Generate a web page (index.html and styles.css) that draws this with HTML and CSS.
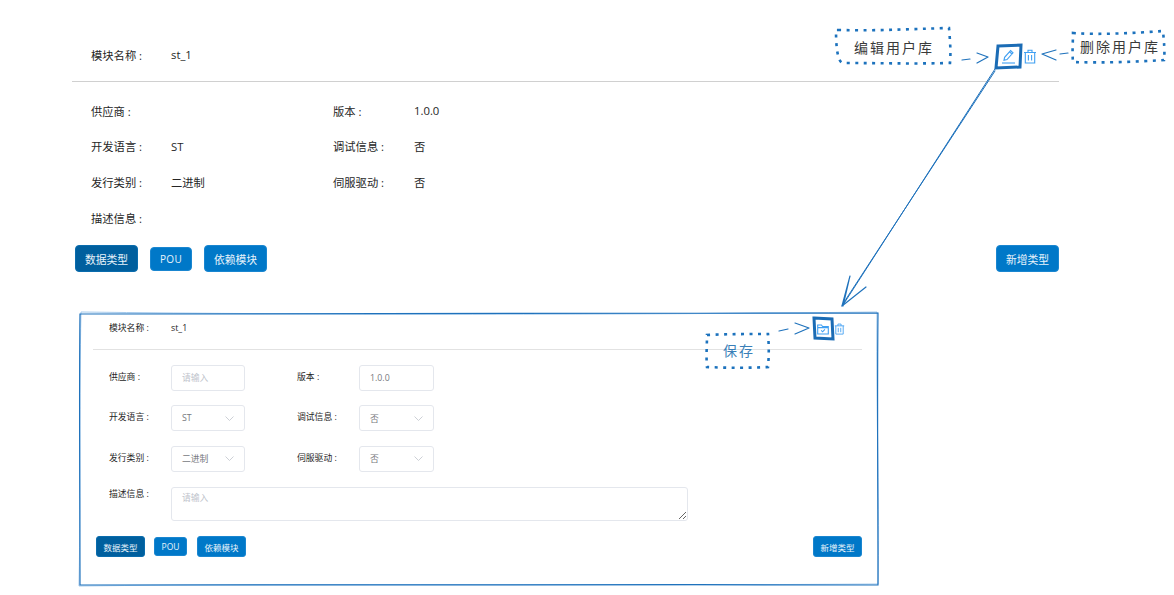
FILE: index.html
```html
<!DOCTYPE html>
<html lang="en">
<head>
    <meta charset="UTF-8">
    <meta name="viewport" content="width=device-width, initial-scale=1.0">
    <title>用户库</title>
    <link rel="stylesheet" href="styles.css">
</head>
<body>
    <div class="page">
        <!-- View mode -->
        <section class="view-panel">
            <div class="panel-header">
                <span class="label">模块名称 :</span>
                <span>st_1</span>
                <div class="icon-group">
                    <svg class="icon" width="15" height="15" viewBox="0 0 15 15"><path d="M3 11.2 3.6 8.3 9.6 1.6 12 3.8 6 10.5Z M8.6 2.8 11 5"/><path d="M1 14H14"/></svg>
                    <svg class="icon" width="14" height="15" viewBox="0 0 14 15"><path d="M1 3.5H13 M5 3.5V1.2H9V3.5 M2.3 3.5V14H11.7V3.5 M5.4 6V11.6 M8.6 6V11.6"/></svg>
                </div>
            </div>
            <div class="view-fields">
                <span class="label">供应商 :</span><span></span><span class="label">版本 :</span><span>1.0.0</span>
                <span class="label">开发语言 :</span><span>ST</span><span class="label">调试信息 :</span><span>否</span>
                <span class="label">发行类别 :</span><span>二进制</span><span class="label">伺服驱动 :</span><span>否</span>
                <span class="label">描述信息 :</span>
            </div>
            <div class="btn-row">
                <button class="btn active">数据类型</button>
                <button class="btn small">POU</button>
                <button class="btn">依赖模块</button>
                <button class="btn push">新增类型</button>
            </div>
        </section>

        <!-- Edit mode -->
        <section class="edit-panel">
            <div class="panel-header">
                <span class="label">模块名称 :</span>
                <span>st_1</span>
                <div class="icon-group">
                    <svg class="icon" width="12" height="11" viewBox="0 0 12 11"><path d="M.7 10V1H4.4L5.6 2.5H11.3V10Z M.7 3.6H11.3"/><path d="M4.2 6.4 5.6 7.8 7.9 5.4"/></svg>
                    <svg class="icon" width="11" height="12" viewBox="0 0 14 15"><path d="M1 3.5H13 M5 3.5V1.2H9V3.5 M2.3 3.5V14H11.7V3.5 M5.4 6V11.6 M8.6 6V11.6"/></svg>
                </div>
            </div>
            <div class="edit-fields">
                <span class="label">供应商 :</span>
                <input class="ctl" type="text" placeholder="请输入">
                <span class="label">版本 :</span>
                <input class="ctl wide" type="text" value="1.0.0">

                <span class="label">开发语言 :</span>
                <div class="ctl select">ST<svg class="chevron" width="9" height="5" viewBox="0 0 9 5"><path d="M.5.5 4.5 4.5 8.5.5"/></svg></div>
                <span class="label">调试信息 :</span>
                <div class="ctl wide select">否<svg class="chevron" width="9" height="5" viewBox="0 0 9 5"><path d="M.5.5 4.5 4.5 8.5.5"/></svg></div>

                <span class="label">发行类别 :</span>
                <div class="ctl select">二进制<svg class="chevron" width="9" height="5" viewBox="0 0 9 5"><path d="M.5.5 4.5 4.5 8.5.5"/></svg></div>
                <span class="label">伺服驱动 :</span>
                <div class="ctl wide select">否<svg class="chevron" width="9" height="5" viewBox="0 0 9 5"><path d="M.5.5 4.5 4.5 8.5.5"/></svg></div>

                <span class="label top">描述信息 :</span>
                <textarea class="ctl area" placeholder="请输入"></textarea>
            </div>
            <div class="btn-row">
                <button class="btn active">数据类型</button>
                <button class="btn small">POU</button>
                <button class="btn">依赖模块</button>
                <button class="btn push">新增类型</button>
            </div>
        </section>
    </div>

    <!-- Hand drawn notes on top of the page -->
    <svg class="sketch" width="1174" height="595" viewBox="0 0 1174 595">
        <g class="dots">
            <path d="M838 30C880 31 910 29 949 28 950 40 951 52 950 63 910 64 880 63 843 63 837 62 836 44 836 30Z"/>
            <path d="M1073 33C1100 35 1135 33 1163 31 1164 42 1165 52 1164 60 1135 62 1100 63 1073 62 1072 52 1073 42 1073 33Z"/>
            <path d="M707 335C728 334 748 334 768 334 769 345 769 356 768 367 748 368 728 368 707 367 706 356 707 345 707 335Z"/>
        </g>
        <text class="note" x="854" y="53">编辑用户库</text>
        <text class="note" x="1080" y="52">删除用户库</text>
        <text class="note save" x="723" y="356">保存</text>

        <g class="marks">
            <path d="M962 60 970 59 M977 53 988 57 977 63"/>
            <path d="M1056 50 1042 54 1056 60 M1060 54 1068 53"/>
            <path d="M779 331 788 329 M795 323 809 328 795 334"/>
            <path class="shaft" d="M995 69 843 305 M995 71 848 296 842 306"/>
            <path d="M850 276 842 306 866 287 M849 280 843 306"/>
        </g>
        <g class="hilite">
            <path d="M998 46 1021 45 1020 67 996 68Z"/>
            <path d="M814 318 832 319 833 339 815 338Z"/>
        </g>
        <g class="frame">
            <path class="thin" d="M81 312C320 315 620 315 877 312 876 420 880 510 878 584 620 586 320 583 79 586 81 480 79 400 81 312Z"/>
            <path d="M80 314C300 315 600 313 878 313 877 400 878 500 878 585 600 584 300 586 80 585 80 500 79 400 80 314Z"/>
        </g>
    </svg>
</body>
</html>
```

FILE: styles.css
```css
html, body {
    margin: 0;
    padding: 0;
    background-color: #fff;
    font-family: "Open Sans", "Noto Sans CJK SC", sans-serif;
    color: #262626;
}

.page {
    display: flex;
    flex-direction: column;
    width: 1174px;
    height: 595px;
    overflow: hidden;
}

.view-panel {
    width: 987px;
    margin-left: 72px;
    font-size: 11.3px;
}

.edit-panel {
    width: 769px;
    height: 271px;
    margin: 41.6px 0 0 80px;
    padding: 0 16px 0 13px;
    font-size: 8.8px;
}

.panel-header {
    display: flex;
    align-items: center;
    border-bottom: 1px solid #d0d0d0;
}

.view-panel .panel-header {
    height: 53px;
    padding: 28px 22px 0 19px;
}

.edit-panel .panel-header {
    height: 28px;
    padding: 0 17px 7px 16px;
    border-bottom-color: #e2e2e2;
}

.panel-header .label {
    flex: none;
}

.view-panel .panel-header .label {
    width: 80px;
}

.edit-panel .panel-header .label {
    width: 62px;
}

.icon-group {
    display: flex;
    align-items: center;
    gap: 7px;
    margin: 4px 0 0 auto;
}

.edit-panel .icon-group {
    gap: 5px;
    margin-top: 3px;
}

.icon {
    fill: none;
    stroke: #3f9ff2;
    stroke-width: 1.1;
}

.view-fields {
    display: grid;
    grid-template-columns: 80px 162px 81px 1fr;
    grid-auto-rows: 35.6px;
    align-items: center;
    padding: 11px 0 0 19px;
}

.edit-fields {
    display: grid;
    grid-template-columns: 62px 126px 62px 329px;
    grid-auto-rows: auto;
    row-gap: 14.5px;
    align-items: center;
    padding: 15px 0 0 16px;
}

.edit-fields .label {
    padding-bottom: 3px;
}

.ctl {
    box-sizing: border-box;
    width: 74px;
    height: 26px;
    margin: 0;
    padding: 0 10px;
    border: 1px solid #e4e7ed;
    border-radius: 3px;
    background-color: #fff;
    color: #77797e;
    font-family: inherit;
    font-size: 8.8px;
}

.ctl.wide {
    width: 75px;
}

.ctl::placeholder {
    color: #c0c4cc;
}

.select {
    display: flex;
    align-items: center;
    justify-content: space-between;
}

.chevron {
    fill: none;
    stroke: #c0c4cc;
    stroke-width: .8;
}

.area {
    display: block;
    grid-column: 2 / span 3;
    width: 517px;
    height: 34px;
    margin-top: 1px;
    padding: 3px 10px;
}

.edit-fields .label.top {
    align-self: start;
    padding: 1px 0 0;
}

.btn-row {
    display: flex;
    align-items: center;
}

.view-panel .btn-row {
    gap: 12px;
    margin-top: 10px;
    padding-left: 3px;
}

.edit-panel .btn-row {
    gap: 9px;
    margin-top: 15px;
    padding-left: 3px;
}

.btn {
    border: 1px solid #1a86d0;
    border-radius: 4px;
    background-color: #0078c8;
    color: #e8f3fb;
    font-family: inherit;
    padding: 0;
}

.btn.active {
    background-color: #005f9e;
    border-color: #0a6cad;
}

.btn.push {
    margin-left: auto;
}

.view-panel .btn {
    width: 63px;
    height: 27px;
    font-size: 10.8px;
}

.view-panel .btn.small {
    width: 42px;
    height: 24px;
    font-size: 10px;
    letter-spacing: .3px;
}

.edit-panel .btn {
    width: 49px;
    height: 21px;
    font-size: 8.5px;
    border-radius: 3px;
}

.edit-panel .btn.small {
    width: 33px;
    height: 19px;
    margin-right: 1px;
}

/* notes drawn by hand over the screenshot */
.sketch {
    position: absolute;
    left: 0;
    top: 0;
    pointer-events: none;
}

.sketch path {
    fill: none;
}

.dots path {
    stroke: #1c72bd;
    stroke-width: 2.6;
    stroke-dasharray: 3 5.5;
}

.note {
    font-family: "Noto Sans CJK SC", sans-serif;
    font-size: 14px;
    letter-spacing: 2px;
    fill: #3a3a3a;
}

.note.save {
    fill: #3a7fb8;
}

.marks path {
    stroke: #1f72bc;
    stroke-width: 1.2;
    stroke-linecap: round;
    stroke-linejoin: round;
}

.marks path.shaft {
    stroke-width: 1;
}

.hilite path {
    stroke: #1b6cb5;
    stroke-width: 3;
}

.frame path {
    stroke: #1f72bc;
    stroke-width: 1.2;
}

.frame path.thin {
    stroke: #8dbbe6;
    stroke-width: .8;
}
```
